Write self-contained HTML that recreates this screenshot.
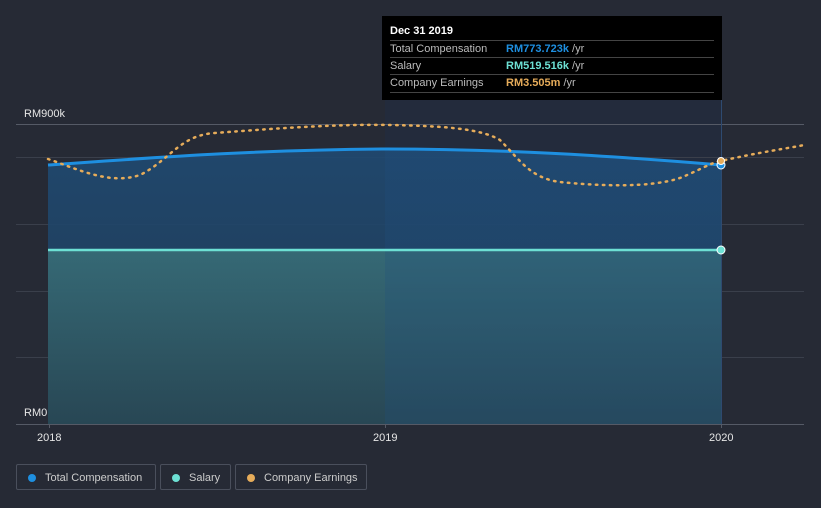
<!DOCTYPE html>
<html><head><style>
body{margin:0;background:#262a35;font-family:"Liberation Sans",sans-serif;}
.wrap{position:relative;width:821px;height:508px;overflow:hidden}
.tt{position:absolute;left:382px;top:16px;width:340px;height:84px;background:#000;color:#fff;font-size:11px}
.tt .h{position:absolute;left:8px;top:9px;font-weight:bold}
.row{position:absolute;left:8px;width:324px;height:17px;border-top:1px solid #444;line-height:16px;color:#bbb}
.row span{position:absolute;left:116px;font-weight:bold}
.row i{font-style:normal;color:#bbb;font-weight:normal}
.leg{position:absolute;top:464px;height:26px;border:1px solid #4a4f5c;border-radius:2px;color:#ccc;font-size:11px;line-height:26px;box-sizing:border-box}
.leg b{position:absolute;left:11px;top:9px;width:8px;height:8px;border-radius:50%}
</style></head><body><div class="wrap">
<svg width="821" height="508" style="position:absolute;left:0;top:0">
<defs>
<linearGradient id="g1" x1="0" y1="0" x2="0" y2="1"><stop offset="0" stop-color="#1f4a72"/><stop offset="1" stop-color="#1f3b55"/></linearGradient>
<linearGradient id="g2" x1="0" y1="0" x2="0" y2="1"><stop offset="0" stop-color="#3b737a"/><stop offset="1" stop-color="#2a4a55"/></linearGradient>
<clipPath id="ca"><path d="M48,165 C150,158 250,150 385,149 C500,149 600,155 721,165 L721,424 L48,424Z"/></clipPath>
</defs>
<rect x="385" y="16" width="337" height="408" fill="#232b3c"/>
<g stroke="#3a3f4b" stroke-width="1">
<line x1="16" y1="124.5" x2="804" y2="124.5" stroke="#555a66"/>
<line x1="16" y1="157.5" x2="804" y2="157.5"/>
<line x1="16" y1="224.5" x2="804" y2="224.5"/>
<line x1="16" y1="291.5" x2="804" y2="291.5"/>
<line x1="16" y1="357.5" x2="804" y2="357.5"/>
</g>
<path d="M48,165 C150,158 250,150 385,149 C500,149 600,155 721,165 L721,424 L48,424Z" fill="url(#g1)" opacity="0.9"/>
<rect x="48" y="250" width="673" height="174" fill="url(#g2)" opacity="0.8"/>
<rect x="385" y="140" width="337" height="284" fill="#1e4e80" opacity="0.25" clip-path="url(#ca)"/>
<line x1="16" y1="424.5" x2="804" y2="424.5" stroke="#555a66"/>
<line x1="49.5" y1="424" x2="49.5" y2="428" stroke="#555a66"/>
<line x1="385.5" y1="424" x2="385.5" y2="428" stroke="#555a66"/>
<line x1="721.5" y1="424" x2="721.5" y2="428" stroke="#555a66"/>
<line x1="721.5" y1="100" x2="721.5" y2="424" stroke="#2e4a70"/>
<path d="M48,165 C150,158 250,150 385,149 C500,149 600,155 721,165" fill="none" stroke="#1e8fe0" stroke-width="3"/>
<line x1="48" y1="250" x2="721" y2="250" stroke="#6de0d4" stroke-width="2.5"/>
<path d="M48,159 C80,170 110,185 140,175 C170,160 180,135 215,133 C280,128 340,124 390,125 C440,126 480,128 500,140 C520,160 530,178 560,182 C600,186 650,188 680,178 C700,170 710,163 721,161 C760,152 790,148 804,145" fill="none" stroke="#e6ac5a" stroke-width="2.5" stroke-dasharray="1.5 5.5" stroke-linecap="round"/>
<circle cx="721" cy="165" r="4" fill="#1e8fe0" stroke="#fff" stroke-width="1"/>
<circle cx="721" cy="161" r="3.5" fill="#e6ac5a" stroke="#fff" stroke-width="1"/>
<circle cx="721" cy="250" r="4" fill="#6de0d4" stroke="#fff" stroke-width="1"/>
<g fill="#e6e6e6" font-size="11" font-family="Liberation Sans,sans-serif">
<text x="24" y="117">RM900k</text>
<text x="24" y="416">RM0</text>
<text x="37" y="441">2018</text>
<text x="373" y="441">2019</text>
<text x="709" y="441">2020</text>
</g>
</svg>
<div class="tt"><div class="h">Dec 31 2019</div>
<div class="row" style="top:24px">Total Compensation<span style="color:#1e8fe0">RM773.723k <i>/yr</i></span></div>
<div class="row" style="top:41px">Salary<span style="color:#6de0d4">RM519.516k <i>/yr</i></span></div>
<div class="row" style="top:58px;border-bottom:1px solid #444">Company Earnings<span style="color:#e6ac5a">RM3.505m <i>/yr</i></span></div>
</div>
<div class="leg" style="left:16px;width:140px"><b style="background:#1e8fe0"></b><span style="position:absolute;left:28px">Total Compensation</span></div>
<div class="leg" style="left:160px;width:71px"><b style="background:#6de0d4"></b><span style="position:absolute;left:28px">Salary</span></div>
<div class="leg" style="left:235px;width:132px"><b style="background:#e6ac5a"></b><span style="position:absolute;left:28px">Company Earnings</span></div>
</div></body></html>
